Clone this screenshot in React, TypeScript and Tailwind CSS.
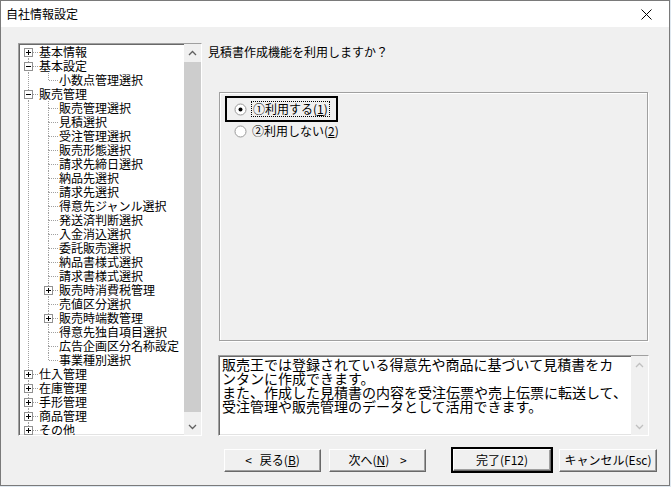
import * as React from 'react';

type Row = { label: string; depth: number; box?: 'plus' | 'minus'; last?: boolean };

const rows: Row[] = [
    { label: '基本情報', depth: 0, box: 'plus' },
    { label: '基本設定', depth: 0, box: 'minus' },
    { label: '小数点管理選択', depth: 1, last: true },
    { label: '販売管理', depth: 0, box: 'minus' },
    { label: '販売管理選択', depth: 1 },
    { label: '見積選択', depth: 1 },
    { label: '受注管理選択', depth: 1 },
    { label: '販売形態選択', depth: 1 },
    { label: '請求先締日選択', depth: 1 },
    { label: '納品先選択', depth: 1 },
    { label: '請求先選択', depth: 1 },
    { label: '得意先ジャンル選択', depth: 1 },
    { label: '発送済判断選択', depth: 1 },
    { label: '入金消込選択', depth: 1 },
    { label: '委託販売選択', depth: 1 },
    { label: '納品書様式選択', depth: 1 },
    { label: '請求書様式選択', depth: 1 },
    { label: '販売時消費税管理', depth: 1, box: 'plus' },
    { label: '売値区分選択', depth: 1 },
    { label: '販売時端数管理', depth: 1, box: 'plus' },
    { label: '得意先独自項目選択', depth: 1 },
    { label: '広告企画区分名称設定', depth: 1 },
    { label: '事業種別選択', depth: 1, last: true },
    { label: '仕入管理', depth: 0, box: 'plus' },
    { label: '在庫管理', depth: 0, box: 'plus' },
    { label: '手形管理', depth: 0, box: 'plus' },
    { label: '商品管理', depth: 0, box: 'plus' },
    { label: 'その他', depth: 0, box: 'plus', last: true },
];

const dot = '#a0a0a0';

// vertical line for an ancestor level that carries on
const PassCell = () => (
    <svg width="20" height="14" className="shrink-0">
        <line x1="9.5" y1="0" x2="9.5" y2="14" stroke={dot} strokeDasharray="1 1" />
    </svg>
);

const OwnCell = ({ first, last, box }: { first: boolean; last?: boolean; box?: 'plus' | 'minus' }) => (
    <svg width="20" height="14" className="shrink-0" shapeRendering="crispEdges">
        {!first && <line x1="9.5" y1="0" x2="9.5" y2="7" stroke={dot} strokeDasharray="1 1" />}
        {!last && <line x1="9.5" y1="7" x2="9.5" y2="14" stroke={dot} strokeDasharray="1 1" />}
        <line x1="10" y1="7.5" x2="19" y2="7.5" stroke={dot} strokeDasharray="1 1" />
        {box && (
            <>
                <rect x="5.5" y="3.5" width="8" height="8" fill="#fff" stroke="#919191" />
                <line x1="7" y1="7.5" x2="12" y2="7.5" stroke="#000" />
                {box === 'plus' && <line x1="9.5" y1="5" x2="9.5" y2="10" stroke="#000" />}
            </>
        )}
    </svg>
);

const Chevron = ({ up, color }: { up?: boolean; color: string }) => (
    <svg width="9" height="6" viewBox="0 0 9 6">
        <path d={up ? 'M1 5 L4.5 1.5 L8 5' : 'M1 1 L4.5 4.5 L8 1'} fill="none" stroke={color} strokeWidth="1.3" />
    </svg>
);

const Sunken = 'border border-t-[#a0a0a0] border-l-[#a0a0a0] border-b-white border-r-white shadow-[inset_1px_1px_0_#696969,inset_-1px_-1px_0_#e3e3e3]';

const Button = ({ children, def, w }: { children: React.ReactNode; def?: boolean; w: string }) => (
    <div className={`${w} ${def ? 'h-[26px] border-2 border-black' : 'h-[23px]'} flex`}>
        <div className="flex-1 flex items-center justify-center border border-t-white border-l-white border-b-[#696969] border-r-[#696969] shadow-[inset_-1px_-1px_0_#a0a0a0] text-[12px] leading-[14px] whitespace-pre">
            {children}
        </div>
    </div>
);

const Radio = ({ checked }: { checked?: boolean }) => (
    <svg width="13" height="13" className="shrink-0">
        <circle cx="6.5" cy="6.5" r="5.5" fill="#fff" stroke="#9a9a9a" />
        {checked && <circle cx="6.5" cy="6.5" r="2" fill="#000" />}
    </svg>
);

export default function App() {
    return (
        <div className="w-[671px] h-[487px] bg-[#dfe8f0] font-['Noto_Sans_CJK_JP','Noto_Sans',sans-serif] text-black">
            <div className="w-[670px] h-[486px] border border-[#7a7a7a] bg-[#f0f0f0] flex flex-col">
                {/* title bar */}
                <div className="h-[26px] bg-white flex items-center justify-between pl-[5px] pr-[17px] shrink-0">
                    <span className="text-[12px] leading-[14px]">自社情報設定</span>
                    <svg width="11" height="11" viewBox="0 0 11 11">
                        <path d="M0.5 0.5 L10.5 10.5 M10.5 0.5 L0.5 10.5" stroke="#000" strokeWidth="1" />
                    </svg>
                </div>

                <div className="pl-[17px] pt-[16px] flex flex-col">
                    <div className="flex">
                        {/* tree */}
                        <div className={`w-[184px] h-[393px] bg-white flex ${Sunken}`}>
                            <div className="flex-1 overflow-hidden pt-[1px]">
                                {rows.map((r, i) => (
                                    <div key={i} className="flex h-[14px] items-center">
                                        {r.depth === 1 && <PassCell />}
                                        <OwnCell first={i === 0} last={r.last} box={r.box} />
                                        <span className="text-[12px] leading-[14px] whitespace-nowrap">{r.label}</span>
                                    </div>
                                ))}
                            </div>
                            <div className="w-[17px] bg-[#f0f0f0] flex flex-col">
                                <div className="h-[17px] flex items-center justify-center">
                                    <Chevron up color="#606060" />
                                </div>
                                <div className="h-[350px] bg-[#cdcdcd] mt-[1px]" />
                                <div className="flex-1" />
                                <div className="h-[17px] flex items-center justify-center">
                                    <Chevron color="#606060" />
                                </div>
                            </div>
                        </div>

                        {/* right side */}
                        <div className="ml-[6px] flex flex-col">
                            <div className="mt-[2px] text-[12px] leading-[14px]">見積書作成機能を利用しますか？</div>
                            <div className="mt-[33px] ml-[11px] w-[429px] h-[249px] border border-[#a0a0a0] shadow-[inset_1px_1px_0_#fff,1px_1px_0_#fff] pt-[3px] pl-[5px]">
                                <div className="w-[113px] h-[26px] border-2 border-black flex items-center pl-[7px] gap-[4px]">
                                    <Radio checked />
                                    <span className="border border-dotted border-black px-[1px] text-[12px] leading-[14px]">
                                        ①利用する(<span className="underline">1</span>)
                                    </span>
                                </div>
                                <div className="h-[16px] flex items-center pl-[9px] gap-[5px] mt-[1px]">
                                    <Radio />
                                    <span className="text-[12px] leading-[14px]">
                                        ②利用しない(<span className="underline">2</span>)
                                    </span>
                                </div>
                            </div>
                            <div className={`mt-[14px] ml-[10px] w-[431px] h-[81px] bg-white flex ${Sunken}`}>
                                <div className="flex-1 pl-[3px] pt-[1px] text-[14px] leading-[14px] whitespace-nowrap overflow-hidden">
                                    販売王では登録されている得意先や商品に基づいて見積書をカ<br />
                                    ンタンに作成できます。<br />
                                    また、作成した見積書の内容を受注伝票や売上伝票に転送して、<br />
                                    受注管理や販売管理のデータとして活用できます。
                                </div>
                                <div className="w-[17px] bg-[#f0f0f0] flex flex-col justify-between">
                                    <div className="h-[17px] flex items-center justify-center">
                                        <Chevron up color="#c0c0c0" />
                                    </div>
                                    <div className="h-[17px] flex items-center justify-center">
                                        <Chevron color="#c0c0c0" />
                                    </div>
                                </div>
                            </div>
                        </div>
                    </div>

                    {/* buttons */}
                    <div className="mt-[11px] pl-[206px] flex items-center">
                        <Button w="w-[97px]">
                            {'<   戻る('}<span className="underline">B</span>)
                        </Button>
                        <div className="w-[8px]" />
                        <Button w="w-[97px]">
                            次へ(<span className="underline">N</span>){'    >'}
                        </Button>
                        <div className="w-[25px]" />
                        <Button w="w-[102px]" def>
                            完了(F12)
                        </Button>
                        <div className="w-[6px]" />
                        <Button w="w-[98px]">キャンセル(Esc)</Button>
                    </div>
                </div>
            </div>
        </div>
    );
}
